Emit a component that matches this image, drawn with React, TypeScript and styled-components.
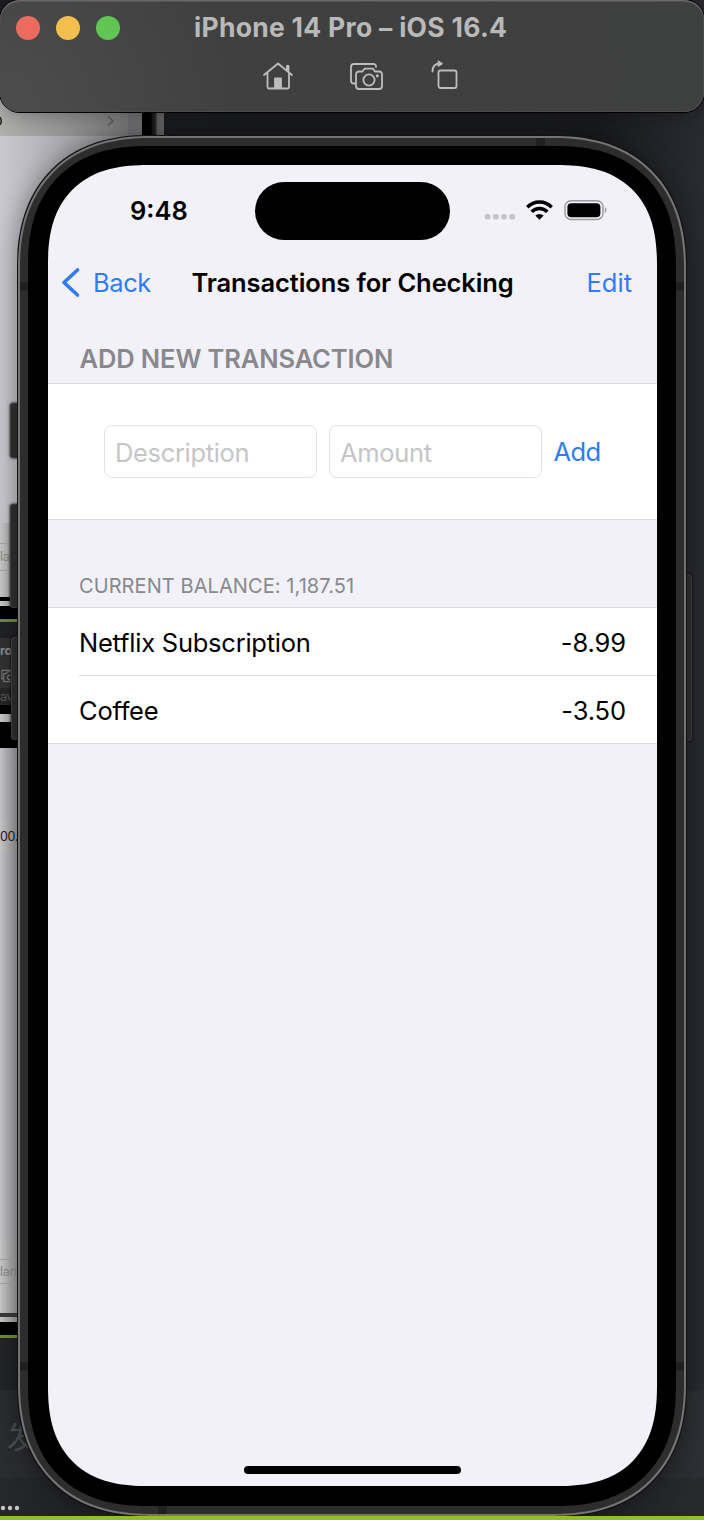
import React from 'react';
import styled, { createGlobalStyle } from 'styled-components';

const Global = createGlobalStyle`
  * { box-sizing: border-box; }
  body { margin: 0; background: #1d1e21; font-family: Inter, 'Noto Sans CJK SC', sans-serif; }
`;

const Desktop = styled.main`
  position: relative;
  width: 704px;
  height: 1520px;
  overflow: hidden;
  background: linear-gradient(90deg, #1c1d20 0, #1a1b1e 600px, #2a2b31 704px);
`;

/* Everything behind the simulator, stacked from top to bottom */
const Backdrop = styled.div`
  height: 100%;
  display: flex;
  flex-direction: column;
`;

const TopWindow = styled.div`
  height: 523px;
  padding-top: 86px;
  display: flex;
  align-items: flex-start;
`;

const TopWindowBody = styled.div`
  width: 142px;
  height: 437px;
  display: flex;
  flex-direction: column;
  background: linear-gradient(90deg, #c9c9cf 0, #8f8f94 120px);
`;

const TopWindowRow = styled.div`
  height: 50px;
  display: flex;
  align-items: center;
  justify-content: space-between;
  padding: 20px 27px 0 0;
  background: linear-gradient(90deg, #b0b0af, #7b7b7b 128px, #737376 128px);
`;

const TopWindowEdge = styled.div`
  width: 22px;
  height: 80px;
  background: linear-gradient(90deg, #000 9px, #151515 10px, #2a2a2a 14px, #626262 15px, #686868);
`;

const tones = {
  lavender: 'linear-gradient(90deg, #c6c6cb 0, #929297 20px)',
  pale: 'linear-gradient(90deg, #c9c9c9 0, #939393 20px)',
  black: '#000',
  edge: '#3c3c3c',
  green: '#718c37',
  night: '#212226',
  bar: '#323232',
  under: '#262626',
};

const Slice = styled.div<{ $h: number; $tone: keyof typeof tones; $color?: string; $bold?: boolean; $lined?: boolean }>`
  flex: none;
  width: 60px;
  height: ${p => p.$h}px;
  background: ${p => tones[p.$tone]};
  color: ${p => p.$color ?? '#8b8b8b'};
  font-size: 12.5px;
  letter-spacing: -0.3px;
  line-height: 12px;
  font-weight: ${p => (p.$bold ? 700 : 400)};
  display: flex;
  align-items: center;
  border: solid #a7a7a7;
  border-width: ${p => (p.$lined ? '1px 0' : '0')};
`;

const DockBand = styled.div<{ $h: number; $bg: string; $pad: number }>`
  flex: none;
  height: ${p => p.$h}px;
  padding-left: ${p => p.$pad}px;
  display: flex;
  align-items: center;
  background: ${p => p.$bg};
  color: #4b4c51;
  font-size: 31px;
`;

const Toolbar = styled.header`
  position: absolute;
  inset: 0 0 auto 0;
  height: 112px;
  border-radius: 20px;
  background: radial-gradient(circle at 0 110px, #4d4d4d 0, #404040 230px, #3e3f3f 100%);
  box-shadow: inset 0 1.5px 0 #686868, inset 0 0 0 1px #4b4b4b, 0 0 0 1px #000, 0 3px 22px rgba(0, 0, 0, 0.3);
  display: grid;
  grid-template-rows: 54px 44px;
`;

const TitleRow = styled.div`
  display: flex;
  gap: 74px;
  padding-left: 16px;
  align-items: center;
`;

const Lights = styled.div`
  display: flex;
  gap: 16px;
  padding-top: 2px;
`;

const Light = styled.i<{ $color: string }>`
  width: 24px;
  height: 24px;
  border-radius: 50%;
  background: ${p => p.$color};
`;

const WindowTitle = styled.h1`
  margin: 0;
  padding-bottom: 1px;
  font-size: 26.5px;
  line-height: 30px;
  font-weight: 700;
  color: #b9b9b9;
  white-space: nowrap;
  letter-spacing: 0.28px;
`;

const Tools = styled.div`
  display: flex;
  align-items: flex-start;
  padding: 4px 0 0 260px;
  gap: 48px;
`;

const squircle = (round: number, smooth: number, power: number) => `
  border-radius: ${round}px;
  @supports (corner-shape: superellipse(1.2)) {
    border-radius: ${smooth}px;
    corner-shape: superellipse(${power});
  }
`;

const Phone = styled.section`
  position: absolute;
  left: 18px;
  top: 136px;
  width: 668px;
  height: 1380px;
  border: 2px solid #747474;
  ${squircle(117, 132, 1.2)}
  background: #2d2d2d;
  padding: 8px;
  box-shadow: 0 0 0 1px #111, 0 0 26px rgba(0, 0, 0, 0.4);
`;

const Bezel = styled.div`
  height: 100%;
  ${squircle(105, 120, 1.24)}
  background: #000;
  padding: 19px 19px 20px 20px;
`;

const Screen = styled.div`
  height: 100%;
  ${squircle(85, 100, 1.296)}
  background: #f2f1f7;
  overflow: hidden;
  display: flex;
  flex-direction: column;
`;

/* Antenna lines set into the metal rim */
const Antenna = styled.i<{ $x: number; $y: number; $across?: boolean }>`
  position: absolute;
  left: ${p => p.$x}px;
  top: ${p => p.$y}px;
  width: ${p => (p.$across ? 9 : 8)}px;
  height: ${p => (p.$across ? 8 : 9)}px;
  background: #202020;
`;

const SideKey = styled.i<{ $x: number; $y: number; $h: number }>`
  position: absolute;
  left: ${p => p.$x}px;
  top: ${p => p.$y}px;
  width: 12px;
  height: ${p => p.$h}px;
  border-radius: 3px;
  background: #303030;
  border: 1px solid #444;
  box-shadow: 0 0 3px #000;
`;

const StatusBar = styled.div`
  height: 75px;
  display: grid;
  grid-template-columns: 207px 195px 1fr;
  padding-top: 17px;
`;

const Clock = styled.time`
  padding: 12px 0 0 82px;
  font-size: 25.5px;
  line-height: 34px;
  font-weight: 600;
`;

const Island = styled.div`
  height: 58px;
  border-radius: 29px;
  background: #000;
`;

const Indicators = styled.div`
  display: flex;
  align-items: flex-start;
  padding: 17px 0 0 34px;
`;

const NavBar = styled.nav`
  height: 86px;
  display: grid;
  grid-template-columns: 143.5px 1fr 100px;
  align-items: center;
  font-size: 25.5px;
  padding: 0 25px 1px 0;
`;

const TextButton = styled.button<{ $spacing?: number; $end?: boolean }>`
  border: 0;
  padding: 0;
  background: none;
  font: inherit;
  color: #2f7cf6;
  display: flex;
  align-items: center;
  justify-content: ${p => (p.$end ? 'flex-end' : 'flex-start')};
  letter-spacing: ${p => p.$spacing ?? 0}px;
  white-space: nowrap;
`;

const NavTitle = styled.h2`
  margin: 0;
  font-size: 25.5px;
  font-weight: 600;
  letter-spacing: -0.1px;
  white-space: nowrap;
`;

const SectionHead = styled.h3<{ $h: number; $large?: boolean }>`
  margin: 0;
  height: ${p => p.$h}px;
  padding: 0 0 8px ${p => (p.$large ? 31.5 : 31)}px;
  display: flex;
  align-items: flex-end;
  font-size: ${p => (p.$large ? 25.5 : 20)}px;
  line-height: ${p => (p.$large ? 32 : 26)}px;
  font-weight: ${p => (p.$large ? 600 : 400)};
  letter-spacing: ${p => (p.$large ? -0.12 : 0.08)}px;
  color: #88888d;
  white-space: nowrap;
`;

const Group = styled.div`
  background: #fff;
  border-top: 1px solid #dcdce0;
  border-bottom: 1px solid #dcdce0;
`;

const Form = styled.div`
  height: 135px;
  padding: 0.5px 0 0 55.5px;
  display: flex;
  align-items: center;
  gap: 12px;
  font-size: 25.5px;
`;

const Field = styled.div`
  width: 213px;
  height: 53px;
  border: 1px solid #e3e3e4;
  border-radius: 8px;
  padding: 1px 0 0 10.5px;
  display: flex;
  align-items: center;
  color: #c5c5c7;
  letter-spacing: -0.34px;
`;

const Row = styled.div`
  margin-left: 31px;
  height: 67px;
  padding: 1px 31px 0 0;
  display: flex;
  align-items: center;
  justify-content: space-between;
  font-size: 25.5px;
  letter-spacing: -0.1px;
  & + & { height: 68px; border-top: 1px solid #dcdce0; }
`;

const RowName = styled.span`
  letter-spacing: -0.24px;
`;

const HomeArea = styled.div`
  margin-top: auto;
  height: 20px;
  display: flex;
  justify-content: center;
`;

const HomeBar = styled.i`
  width: 217px;
  height: 8px;
  border-radius: 4px;
  background: #000;
`;

const GroundLine = styled.div`
  position: absolute;
  inset: auto 0 0 0;
  height: 4px;
  background: #91bb3a;
`;

const HomeIcon = () => (
  <svg width="36" height="36" viewBox="0 0 36 36" fill="none" stroke="#bdbdbd" strokeWidth="1.8" strokeLinejoin="round" strokeLinecap="round">
    <path d="M4 17L18 5.500 32 17M7.500 15v14a1.500 1.500 0 0 0 1.500 1.500h18.500a1.500 1.500 0 0 0 1.500-1.500V15M27 12V8h1.500v5.500" />
    <path d="M15 30V20.500h6V30z" fill="#bdbdbd" />
  </svg>
);

const CameraIcon = () => (
  <svg width="36" height="36" viewBox="-6 -5 36 36" overflow="visible" fill="none" stroke="#bdbdbd" strokeWidth="1.8" strokeLinejoin="round" strokeLinecap="round">
    <path d="M5 20.500H3.500A2.500 2.500 0 0 1 1 18V4a3 3 0 0 1 3-3h19.500a2.500 2.500 0 0 1 2.500 2.500V4" />
    <path d="M9 8.500h3.500l2-2.800h8.500l2 2.800h4A3 3 0 0 1 32 11.500v11.500a3 3 0 0 1-3 3H9a3 3 0 0 1-3-3V11.500a3 3 0 0 1 3-3z" />
    <circle cx="19" cy="17" r="5.600" />
    <circle cx="27.300" cy="12.800" r="0.700" />
  </svg>
);

const RotateIcon = () => (
  <svg width="30" height="36" viewBox="-3 1 30 36" fill="none" stroke="#bdbdbd" strokeWidth="1.8" strokeLinecap="round">
    <rect x="7.500" y="13.500" width="18" height="17.500" rx="2" />
    <path d="M1.500 14.500c0-5 2.500-8 8-8" />
    <path d="M7.500 4l4 2.700-4 2.700z" fill="#bdbdbd" strokeWidth="1" />
  </svg>
);

const StatusIcons = () => (
  <svg width="124" height="24" viewBox="0 0 124 24">
    <g fill="#c3c3c8">
      <rect x="0.800" y="15" width="5.600" height="5.600" rx="1.800" />
      <rect x="9" y="15" width="5.600" height="5.600" rx="1.800" />
      <rect x="17.200" y="15" width="5.600" height="5.600" rx="1.800" />
      <rect x="25.400" y="15" width="5.600" height="5.600" rx="1.800" />
    </g>
    <g fill="none" stroke="#000" strokeWidth="3.500">
      <path d="M43.300 8.300a16.800 16.800 0 0 1 24.400 0" />
      <path d="M47.700 12.800a10.800 10.800 0 0 1 15.600 0" />
    </g>
    <path d="M51.300 16.600a6 6 0 0 1 8.400 0L55.500 20.800z" />
    <rect x="81" y="1.800" width="38" height="18.600" rx="6" fill="none" stroke="#9c9ca0" strokeWidth="1.500" />
    <rect x="83.400" y="4.200" width="33" height="14" rx="4" />
    <path d="M120.800 8.300c2.200.8 2.200 4.800 0 5.600z" fill="#9c9ca0" />
  </svg>
);

const OtherWindows = () => (
  <Backdrop>
    <TopWindow>
      <TopWindowBody>
        <TopWindowRow>
          <svg width="4" height="12" fill="none" stroke="#222" strokeWidth="1.600"><ellipse cx="-2" cy="6" rx="3.300" ry="4.400" /></svg>
          <svg width="9" height="12" fill="none" stroke="#5d5d5d" strokeWidth="1.400"><path d="M2 1.500l5 4.500-5 4.500" /></svg>
        </TopWindowRow>
      </TopWindowBody>
      <TopWindowEdge />
    </TopWindow>
    <Slice $h={20} $tone="pale" />
    <Slice $h={28} $tone="pale" $lined>lan</Slice>
    <Slice $h={26} $tone="pale" />
    <Slice $h={4} $tone="black" />
    <Slice $h={5} $tone="pale" />
    <Slice $h={13} $tone="black" />
    <Slice $h={3} $tone="green" />
    <Slice $h={16} $tone="night" />
    <Slice $h={25} $tone="bar" $bold $color="#8c8c8c">ro</Slice>
    <Slice $h={25} $tone="bar">
      <svg width="18" height="14" viewBox="-2 0 38 28" fill="none" stroke="#777" strokeWidth="2.500">
        <path d="M5 20H2V2h24v3M6 9h5l3-4h9l3 4h6v17H6z" /><circle cx="19" cy="17" r="5" />
      </svg>
    </Slice>
    <Slice $h={17} $tone="under" $color="#595959">av</Slice>
    <Slice $h={9} $tone="black" />
    <Slice $h={8} $tone="pale" />
    <Slice $h={26} $tone="black" />
    <Slice $h={73} $tone="lavender" />
    <Slice $h={31} $tone="pale" $color="#222">00.0</Slice>
    <Slice $h={387} $tone="lavender" />
    <Slice $h={20} $tone="pale" />
    <Slice $h={25} $tone="pale" $lined>land</Slice>
    <Slice $h={29} $tone="pale" />
    <Slice $h={4} $tone="edge" />
    <Slice $h={5} $tone="pale" />
    <Slice $h={13} $tone="black" />
    <Slice $h={3} $tone="green" />
    <DockBand $h={52} $pad={0} $bg="linear-gradient(90deg, #242529, #1c1d20 60px, #1a1b1e 600px, #2a2b31)" />
    <DockBand $h={88} $pad={7} $bg="linear-gradient(90deg, #2b2c30, #25262a 60px, #25262a 640px, #2f3035)">发</DockBand>
    <DockBand $h={42} $pad={0} $bg="linear-gradient(90deg, #26272a, #1b1c1e 160px, #1b1c1e 540px, #292a2e)">
      <svg width="20" height="24" viewBox="0 0 20 24" fill="#c5c5c5"><circle cx="3" cy="21" r="2.200" /><circle cx="10" cy="21" r="2.200" /><circle cx="17" cy="21" r="2.200" /></svg>
    </DockBand>
  </Backdrop>
);

export default function App() {
  return (
    <>
      <Global />
      <Desktop>
        <OtherWindows />
        <SideKey $x={10} $y={403} $h={55} />
        <SideKey $x={10} $y={504} $h={104} />
        <SideKey $x={11} $y={637} $h={103} />
        <SideKey $x={680} $y={574} $h={167} />
        <Phone>
          <Antenna $x={516} $y={0} $across />
          <Antenna $x={0} $y={144} />
          <Antenna $x={656} $y={144} />
          <Antenna $x={0} $y={1224} />
          <Antenna $x={656} $y={1224} />
          <Antenna $x={138} $y={1368} $across />
          <Bezel>
            <Screen>
              <StatusBar>
                <Clock>9:48</Clock>
                <Island />
                <Indicators><StatusIcons /></Indicators>
              </StatusBar>
              <NavBar>
                <TextButton $spacing={-0.4}>
                  <svg width="45" height="32" viewBox="0 0 45 32" fill="none" stroke="#2f7cf6" strokeWidth="3.700" strokeLinecap="round" strokeLinejoin="round"><path d="M29.500 3L16 15.500 29.500 28" /></svg>
                  Back
                </TextButton>
                <NavTitle>Transactions for Checking</NavTitle>
                <TextButton $end>Edit</TextButton>
              </NavBar>
              <SectionHead $h={57} $large>ADD NEW TRANSACTION</SectionHead>
              <Group>
                <Form>
                  <Field>Description</Field>
                  <Field>Amount</Field>
                  <TextButton $spacing={-0.6}>Add</TextButton>
                </Form>
              </Group>
              <SectionHead $h={87}>CURRENT BALANCE: 1,187.51</SectionHead>
              <Group>
                <Row><RowName>Netflix Subscription</RowName><span>-8.99</span></Row>
                <Row><RowName>Coffee</RowName><span>-3.50</span></Row>
              </Group>
              <HomeArea><HomeBar /></HomeArea>
            </Screen>
          </Bezel>
        </Phone>
        <Toolbar>
          <TitleRow>
            <Lights><Light $color="#ed6a5e" /><Light $color="#f5bf4f" /><Light $color="#61c554" /></Lights>
            <WindowTitle>iPhone 14 Pro – iOS 16.4</WindowTitle>
          </TitleRow>
          <Tools>
            <HomeIcon />
            <CameraIcon />
            <RotateIcon />
          </Tools>
        </Toolbar>
        <GroundLine />
      </Desktop>
    </>
  );
}
